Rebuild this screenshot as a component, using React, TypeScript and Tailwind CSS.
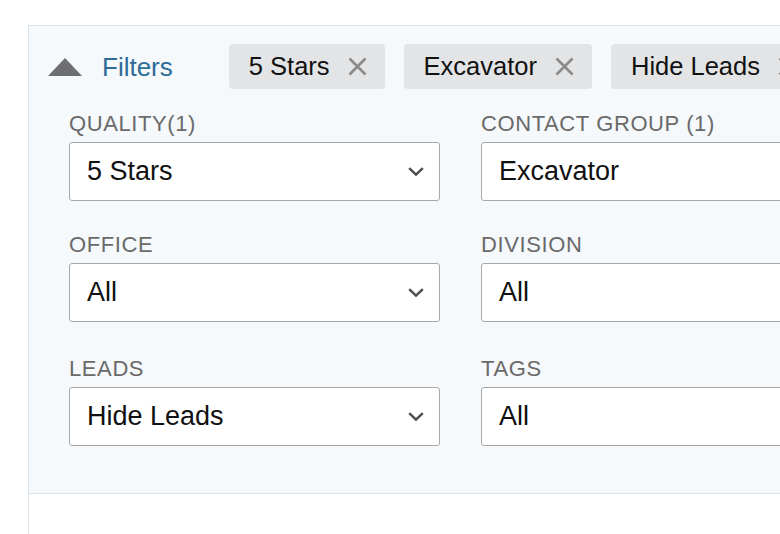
const chips = ["5 Stars", "Excavator", "Hide Leads"];

const rows = [
  [
    { label: "QUALITY(1)", value: "5 Stars" },
    { label: "CONTACT GROUP (1)", value: "Excavator" },
  ],
  [
    { label: "OFFICE", value: "All" },
    { label: "DIVISION", value: "All" },
  ],
  [
    { label: "LEADS", value: "Hide Leads" },
    { label: "TAGS", value: "All" },
  ],
];

function CloseIcon() {
  return (
    <svg width="19" height="19" viewBox="0 0 19 19" className="shrink-0">
      <path d="M1.5 1.5 L17.5 17.5 M17.5 1.5 L1.5 17.5" stroke="#8a8a8a" strokeWidth="2.6" />
    </svg>
  );
}

function Chevron() {
  return (
    <svg width="16" height="9" viewBox="0 0 16 9" className="shrink-0">
      <path d="M1.2 1.2 L8 7.6 L14.8 1.2" stroke="#4f4f4f" strokeWidth="2.5" fill="none" />
    </svg>
  );
}

function SelectBox({ label, value }: { label: string; value: string }) {
  return (
    <div className="flex flex-col">
      <span className="text-[22px] leading-[26px] tracking-[0.6px] text-[#6a6a6a]">{label}</span>
      <div className="mt-[5px] flex h-[59px] items-center justify-between rounded-[3px] border border-[#a8a8a8] bg-white pl-[17px] pr-[15px]">
        <span className="text-[27px] leading-none text-[#111]">{value}</span>
        <Chevron />
      </div>
    </div>
  );
}

export default function App() {
  return (
    <div className="h-[534px] w-[780px] overflow-hidden bg-white pl-[28px] pt-[25px] font-['Liberation_Sans',Arial,sans-serif]">
      <div className="h-[600px] w-[920px] border-l border-t border-[#dde2e6]">
        <div className="border-b border-[#dde2e6] bg-[#f5f9fc] pb-[47px]">
          {/* Header with active filter chips */}
          <div className="flex flex-nowrap items-center pl-[19px] pt-[18px]">
            <svg width="34" height="18" viewBox="0 0 34 18" className="shrink-0">
              <path d="M0 18 L17 0 L34 18 Z" fill="#6e6e73" />
            </svg>
            <span className="ml-[20px] shrink-0 text-[26px] leading-none text-[#2f6b97]">Filters</span>
            <div className="ml-[56px] flex shrink-0 gap-[19px]">
              {chips.map((c) => (
                <div
                  key={c}
                  className="flex h-[45px] shrink-0 items-center gap-[18px] rounded-[4px] bg-[#e3e4e6] pl-[20px] pr-[18px]"
                >
                  <span className="text-[25.5px] leading-none text-[#111]">{c}</span>
                  <CloseIcon />
                </div>
              ))}
            </div>
          </div>

          {/* Filter selects */}
          <div className="mt-[22px] flex flex-col pl-[40px]">
            {rows.map((row, i) => (
              <div
                key={i}
                className={`grid grid-cols-[371px_371px] gap-x-[41px] ${i === 1 ? "mt-[31px]" : i === 2 ? "mt-[34px]" : ""}`}
              >
                {row.map((f) => (
                  <SelectBox key={f.label} label={f.label} value={f.value} />
                ))}
              </div>
            ))}
          </div>
        </div>
      </div>
    </div>
  );
}
